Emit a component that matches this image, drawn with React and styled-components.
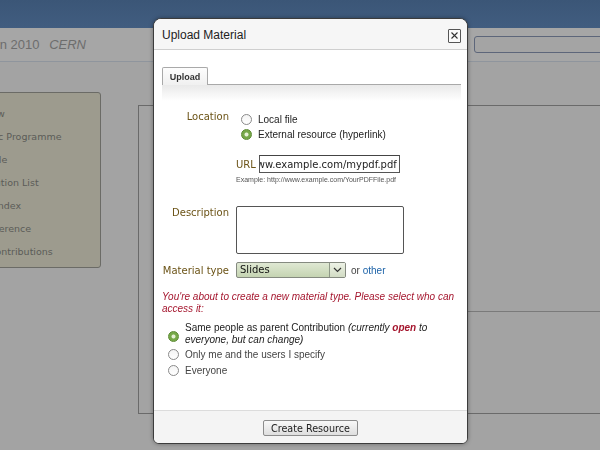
import React from "react";
import styled, { createGlobalStyle } from "styled-components";

const Global = createGlobalStyle`
  html, body { margin: 0; padding: 0; }
  body {
    width: 600px; height: 450px; overflow: hidden;
    background: #a3a3a3;
    font-family: "DejaVu Sans", Verdana, sans-serif;
  }
`;

const Page = styled.div`
  width: 600px; height: 450px; overflow: hidden;
  display: flex; flex-direction: column;
`;
const TopBar = styled.div`
  height: 28px; flex: none;
  background: linear-gradient(#3b5677, #415d80);
`;
const Header = styled.div`
  height: 33px; flex: none;
  border-bottom: 1px solid #8f959d;
  background: #a6a6a6;
  display: flex; align-items: center; justify-content: space-between;
`;
const ConfTitle = styled.div`
  font-family: "Liberation Sans", Arial, sans-serif;
  font-size: 13px; color: #6d6d6d; white-space: nowrap;
  margin-left: -92px;
  em { margin-left: 6px; }
`;
const Search = styled.div`
  width: 140px; height: 15px; margin-right: -16px;
  border: 1px solid #5d667a; border-radius: 3px;
  background: #a4a4a4;
`;
const Main = styled.div`
  display: flex; align-items: flex-start;
`;
const SideMenu = styled.ul`
  list-style: none; margin: 30px 0 0 -58px;
  padding: 9px 0 6px 17px; width: 140px;
  background: #9d9b8e; border: 1px solid #6b6b66; border-radius: 3px;
`;
const MenuItem = styled.li`
  font-size: 9.5px; color: #5b5b58; white-space: nowrap;
  height: ${p => (p.$short ? 21 : 23)}px; line-height: 23px;
  padding-left: ${p => (p.$sub ? 12 : 0)}px;
`;
const ContentBox = styled.div`
  flex: 1; margin: 43px -20px 0 37px;
  height: 307px; border: 1px solid #6a6a6a;
  display: flex; flex-direction: column;
`;
const ContentSpacer = styled.div`
  height: 205px;
`;
const ContentDivider = styled.div`
  margin-left: 60px; border-top: 1px solid #7a7a7a;
`;

/* Dialog */
const Dialog = styled.div`
  position: fixed; left: 153px; top: 18px;
  width: 315px; height: 426px; box-sizing: border-box;
  border: 1px solid #3c3c3c; border-radius: 8px 8px 6px 6px;
  background: #fff; overflow: hidden;
  box-shadow: 0 0 4px rgba(0,0,0,0.35);
  display: flex; flex-direction: column;
`;
const TitleBar = styled.div`
  height: 30px; flex: none;
  background: #f6f6f6; border-bottom: 1px solid #cfcfcf;
  display: flex; align-items: center; justify-content: space-between;
  padding: 0 6px 0 8px;
`;
const Title = styled.div`
  font-family: "Liberation Sans", Arial, sans-serif;
  font-size: 12px; color: #222; margin-top: 2px;
`;
const CloseBtn = styled.div`
  width: 11px; height: 12px; margin-top: 3px;
  border: 1px solid #555; border-radius: 1px; background: #fafafa;
  display: flex; align-items: center; justify-content: center;
`;
const DialogBody = styled.div`
  flex: 1; padding: 16px 6px 0 8px;
  display: flex; flex-direction: column;
`;
const TabStrip = styled.div`
  height: 19px; display: flex; align-items: flex-end;
  &::after {
    content: ""; flex: 1; align-self: flex-end;
    border-bottom: 1px solid #a9a9a9;
  }
`;
const Tab = styled.div`
  height: 18px; width: 46px;
  border: 1px solid #a9a9a9; border-bottom: none; border-radius: 2px 2px 0 0;
  background: linear-gradient(#fdfdfd, #f0f0f0);
  font-family: "Liberation Sans", Arial, sans-serif;
  font-weight: bold; font-size: 9px; color: #333;
  display: flex; align-items: center; justify-content: center;
  padding-top: 1px; box-sizing: border-box;
`;
const FormArea = styled.div`
  flex: 1;
  background: linear-gradient(#e9e9e9, #ffffff 16px);
  padding-top: 27px;
  display: flex; flex-direction: column;
`;
const FormGrid = styled.div`
  display: grid; grid-template-columns: 67px 1fr; column-gap: 7px;
  align-items: start;
`;
const Label = styled.div`
  text-align: right; font-size: 10px; color: #6b5316;
  line-height: 13px; white-space: nowrap;
  margin-top: ${p => p.$mt || 0}px;
  align-self: ${p => (p.$center ? "center" : "start")};
`;
const RadioGroup = styled.div`
  display: flex; flex-direction: column; padding-left: 5px;
`;
const RadioRow = styled.label`
  display: flex; align-items: center; gap: 6px;
  height: ${p => p.$h || 15}px;
  font-family: "Liberation Sans", Arial, sans-serif;
  font-size: 10px; color: ${p => p.$color || "#222"};
`;
const Radio = styled.span`
  flex: none; width: 9px; height: 9px; border-radius: 50%;
  border: 1px solid ${p => (p.$on ? "#5c8a33" : "#8a8a8a")};
  background: ${p => p.$on
    ? "radial-gradient(circle, #e6f0d6 0 1.6px, #76a848 2.4px)"
    : "linear-gradient(#f4f4f4, #ffffff)"};
  margin-top: ${p => p.$mt || 0}px;
  align-self: ${p => (p.$mt ? "flex-start" : "center")};
`;
const Spacer = styled.div`
  grid-column: 1 / -1; height: ${p => p.$h}px;
`;
const UrlRow = styled.div`
  display: flex; align-items: center; gap: 3px;
`;
const UrlLabel = styled.span`
  font-size: 10px; color: #6b5316;
`;
const UrlInput = styled.div`
  width: 137px; height: 16px; box-sizing: content-box;
  border: 1px solid #555; border-top-color: #444;
  display: flex; justify-content: flex-end; align-items: center;
  overflow: hidden; white-space: nowrap;
  font-size: 10px; color: #222; padding: 0 2px 0 0;
`;
const Example = styled.div`
  font-family: "Liberation Sans", Arial, sans-serif;
  font-size: 7px; color: #555; line-height: 9px; margin-top: 2px;
`;
const TextArea = styled.div`
  width: 166px; height: 46px;
  border: 1px solid #555; border-radius: 2px;
`;
const SelectRow = styled.div`
  display: flex; align-items: center; gap: 5px;
`;
const Select = styled.div`
  width: 110px; height: 16px; box-sizing: border-box;
  border: 1px solid #858a80; border-radius: 2px;
  background: linear-gradient(#dfe8d3, #c5d4b2);
  display: flex; align-items: stretch;
  font-size: 10px; color: #111;
`;
const SelectText = styled.span`
  flex: 1; padding-left: 3px; line-height: 14px;
`;
const SelectArrow = styled.span`
  width: 15px; border-left: 1px solid #8e9887;
  background: linear-gradient(#edf2e6, #d2dcc4);
  display: flex; align-items: center; justify-content: center;
`;
const OrText = styled.span`
  font-family: "Liberation Sans", Arial, sans-serif;
  font-size: 10px; color: #444;
  a { color: #1d63a8; text-decoration: none; }
`;
const Warning = styled.p`
  margin: 13px 0 0 0;
  font-family: "Liberation Sans", Arial, sans-serif;
  font-style: italic; font-size: 10px; line-height: 12px; color: #a5162e;
`;
const Options = styled.div`
  margin: 7px 0 0 6px; display: flex; flex-direction: column;
`;
const OptionText = styled.span`
  line-height: 12px;
  i { color: #222; }
  b { color: #a5162e; }
`;
const Footer = styled.div`
  height: 32px; flex: none;
  border-top: 1px solid #dcdcdc; background: #f4f4f4;
  display: flex; align-items: center; justify-content: center;
`;
const Button = styled.button`
  width: 95px; height: 16px; padding: 0;
  border: 1px solid #8c8c8c; border-radius: 2px;
  background: linear-gradient(#f8f8f8, #dedede);
  font-family: "DejaVu Sans", Verdana, sans-serif; font-size: 9.6px; color: #222;
  margin-top: 2px;
`;

const menu = [
  ["Overview"], ["Scientific Programme"], ["Timetable"], ["Contribution List"],
  ["Author Index"], ["My Conference"], ["My Contributions", true],
];

export default function App() {
  return (
    <>
      <Global />
      <Page>
        <TopBar />
        <Header>
          <ConfTitle>Summer Session 2010 <em>CERN</em></ConfTitle>
          <Search />
        </Header>
        <Main>
          <SideMenu>
            {menu.map(([t, sub], i) => (
              <MenuItem key={t} $sub={sub} $short={i === menu.length - 1}>{t}</MenuItem>
            ))}
          </SideMenu>
          <ContentBox>
            <ContentSpacer />
            <ContentDivider />
          </ContentBox>
        </Main>
      </Page>

      <Dialog>
        <TitleBar>
          <Title>Upload Material</Title>
          <CloseBtn>
            <svg width="7" height="7" viewBox="0 0 7 7">
              <path d="M0.5 0.5 L6.5 6.5 M6.5 0.5 L0.5 6.5" stroke="#333" strokeWidth="1.1" />
            </svg>
          </CloseBtn>
        </TitleBar>
        <DialogBody>
          <TabStrip>
            <Tab>Upload</Tab>
          </TabStrip>
          <FormArea>
            <FormGrid>
              <Label $mt={-2}>Location</Label>
              <RadioGroup>
                <RadioRow><Radio />Local file</RadioRow>
                <RadioRow><Radio $on />External resource (hyperlink)</RadioRow>
              </RadioGroup>
              <Spacer $h={13} />
              <div />
              <div>
                <UrlRow>
                  <UrlLabel>URL</UrlLabel>
                  <UrlInput>www.example.com/mypdf.pdf</UrlInput>
                </UrlRow>
                <Example>Example: http://www.example.com/YourPDFFile.pdf</Example>
              </div>
              <Spacer $h={22} />
              <Label>Description</Label>
              <TextArea />
              <Spacer $h={8} />
              <Label $center>Material type</Label>
              <SelectRow>
                <Select>
                  <SelectText>Slides</SelectText>
                  <SelectArrow>
                    <svg width="9" height="6" viewBox="0 0 9 6">
                      <path d="M1 1 L4.5 4.5 L8 1" fill="none" stroke="#333" strokeWidth="1.2" />
                    </svg>
                  </SelectArrow>
                </Select>
                <OrText>or <a href="#">other</a></OrText>
              </SelectRow>
            </FormGrid>
            <Warning>
              You're about to create a new material type. Please select who can access it:
            </Warning>
            <Options>
              <RadioRow $h={24}>
                <Radio $on $mt={9} />
                <OptionText>
                  Same people as parent Contribution <i>(currently <b>open</b> to everyone, but can change)</i>
                </OptionText>
              </RadioRow>
              <RadioRow $h={16} $color="#444">
                <Radio />Only me and the users I specify
              </RadioRow>
              <RadioRow $h={16} $color="#444">
                <Radio />Everyone
              </RadioRow>
            </Options>
          </FormArea>
        </DialogBody>
        <Footer>
          <Button>Create Resource</Button>
        </Footer>
      </Dialog>
    </>
  );
}
